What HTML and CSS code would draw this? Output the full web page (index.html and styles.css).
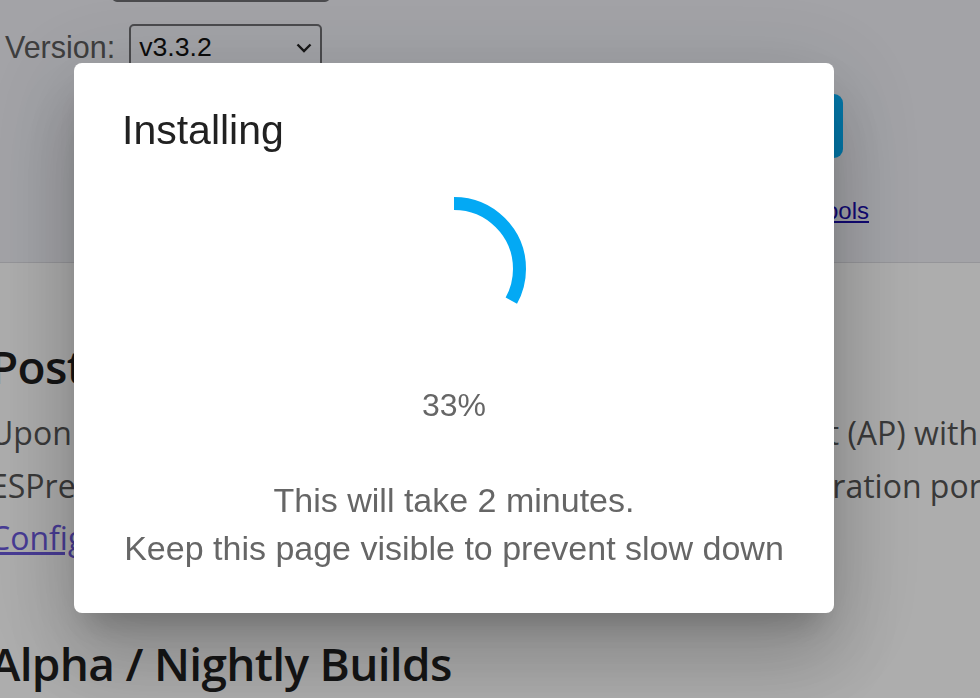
FILE: index.html
```html
<!DOCTYPE html>
<html lang="en">
<head>
  <meta charset="UTF-8" />
  <meta name="viewport" content="width=device-width, initial-scale=1" />
  <title>Install ESPresense</title>
  <link rel="stylesheet" href="styles.css">
</head>
<body>
  <div class="page">
    <header class="installer">
      <div class="field">
        <label for="flavor">Flavor:</label>
        <div class="select-wrap select-flavor">
          <select id="flavor"><option>Default</option></select>
          <svg class="chevron" viewBox="0 0 16 10"><path d="M1.5 1.5 8 8l6.5-6.5" /></svg>
        </div>
      </div>
      <div class="field">
        <label for="version">Version:</label>
        <div class="select-wrap">
          <select id="version"><option>v3.3.2</option></select>
          <svg class="chevron" viewBox="0 0 16 10"><path d="M1.5 1.5 8 8l6.5-6.5" /></svg>
        </div>
      </div>
      <div class="actions">
        <button class="install">Install</button>
        <p class="powered">Powered by <a href="#">ESP Web Tools</a></p>
      </div>
    </header>

    <main class="content">
      <h2>Post Install</h2>
      <p class="line"><span>Upon startup the</span><span>access point (AP) with</span></p>
      <p class="line line-wide"><span>ESPresense-XXXX.</span><span>the configuration portal</span></p>
      <p class="line"><a href="#">Configure WiFi</a></p>

      <h2>Alpha / Nightly Builds</h2>
    </main>
  </div>

  <div class="scrim">
    <div class="dialog">
      <h1 class="dialog-title">Installing</h1>
      <div class="progress">
        <svg viewBox="0 0 144 144" width="144" height="144">
          <circle cx="72" cy="72" r="65.5" fill="none" stroke="#03a9f4" stroke-width="13"
                  stroke-dasharray="135.8 411.6" transform="rotate(-90 72 72)" />
        </svg>
      </div>
      <div class="percent">33%</div>
      <p class="note">This will take 2 minutes.<br>Keep this page visible to prevent slow down</p>
    </div>
  </div>
</body>
</html>
```

FILE: styles.css
```css
html, body {
  margin: 0;
  overflow: hidden;
  height: 100%;
}
body {
  font-family: "Liberation Sans", Arial, sans-serif;
  background-color: #fff;
}
.page {
  margin-left: -10px;
}
.installer {
  margin-top: -64px;
  padding: 20px 0 35px 15px;
  background-color: #f0f1f7;
  border-bottom: 1px solid #dcdce2;
  display: flex;
  flex-direction: column;
}
.field {
  display: flex;
  align-items: center;
  gap: 14px;
  margin-bottom: 22px;
}
.field label {
  font-size: 30.5px;
  color: #5c5c5c;
}
.select-wrap {
  position: relative;
}
.select-wrap select {
  appearance: none;
  width: 193px;
  height: 46px;
  padding: 0 0 0 8px;
  font-family: "Liberation Sans", Arial, sans-serif;
  font-size: 26.67px;
  color: #111;
  background: transparent;
  border: 2px solid #6e6e72;
  border-radius: 5px;
}
.select-flavor select {
  width: 218px;
}
.chevron {
  position: absolute;
  right: 10px;
  top: 19px;
  width: 16px;
  height: 10px;
  fill: none;
  stroke: #222;
  stroke-width: 2.4;
}
.actions {
  display: flex;
  flex-direction: column;
  align-items: flex-end;
  width: 864px;
  margin-top: 2px;
}
.install {
  width: 420px;
  height: 64px;
  margin-right: 26px;
  border: none;
  border-radius: 9px;
  background-color: #05b2fc;
  color: #fff;
  font-size: 28px;
}
.powered {
  margin: 37px 0 0 0;
  font-size: 24px;
  line-height: 32px;
  color: #444;
}
.powered a {
  color: #1a0dab;
}
.content {
  padding-top: 74px;
  font-family: "Open Sans", "Noto Sans", sans-serif;
  color: #555;
}
.content h2 {
  margin: 0;
  font-size: 46px;
  font-weight: 600;
  letter-spacing: -0.7px;
  line-height: 58px;
  color: #1f1f1f;
}
.line {
  display: flex;
  justify-content: space-between;
  width: 988px;
  margin: 0;
  font-size: 32px;
  line-height: 52.5px;
  white-space: nowrap;
}
.line-wide {
  width: 1029px;
}
.line a {
  color: #6a58dc;
}
.content .line + h2 {
  margin-top: 69px;
}
.content h2:first-child {
  margin-bottom: 12px;
}
.scrim {
  position: fixed;
  inset: 0;
  background-color: rgba(0, 0, 0, 0.32);
}
.dialog {
  position: absolute;
  left: 74px;
  top: 63px;
  width: 760px;
  height: 550px;
  box-sizing: border-box;
  padding: 43px 48px 0 48px;
  background-color: #fff;
  border-radius: 8px;
  box-shadow: 0 22px 30px -14px rgba(0, 0, 0, 0.2), 0 48px 76px 6px rgba(0, 0, 0, 0.14), 0 18px 92px 16px rgba(0, 0, 0, 0.12);
  text-align: center;
  font-family: "Liberation Sans", Arial, sans-serif;
}
.dialog-title {
  margin: 0;
  text-align: left;
  font-size: 41px;
  font-weight: 400;
  line-height: 48px;
  color: #212121;
}
.progress {
  margin-top: 43px;
  height: 144px;
}
.progress svg {
  display: block;
  margin: 0 auto;
}
.percent {
  margin-top: 44px;
  font-size: 32px;
  line-height: 40px;
  color: #666;
}
.note {
  margin: 51px 0 0 0;
  font-size: 34px;
  line-height: 48px;
  color: #666;
}
```
